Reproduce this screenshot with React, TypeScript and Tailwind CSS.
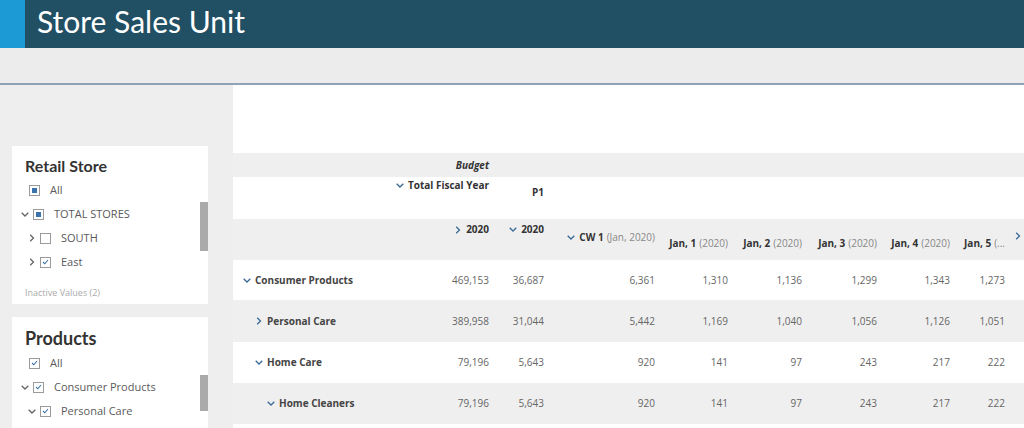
import React from 'react'

const FONT = { fontFamily: '"Open Sans", "Liberation Sans", sans-serif' }
const TITLE_FONT = { fontFamily: 'Lato, "Open Sans", sans-serif' }

const COLS = 'grid grid-cols-[167px_97px_55px_111px_73px_74px_75px_73px_55px_11px]'

function Chevron({ dir, className = '' }: { dir: 'down' | 'right'; className?: string }) {
  if (dir === 'down') {
    return (
      <svg width="8" height="5" viewBox="0 0 8 5" className={`flex-shrink-0 ${className}`}>
        <polyline points="0.7,0.7 4,4 7.3,0.7" fill="none" stroke="currentColor" strokeWidth="1.3" />
      </svg>
    )
  }
  return (
    <svg width="8" height="8" viewBox="0 0 8 8" className={`flex-shrink-0 ${className}`}>
      <polyline points="2.2,0.7 5.5,4 2.2,7.3" fill="none" stroke="currentColor" strokeWidth="1.3" />
    </svg>
  )
}

type Check = 'partial' | 'checked' | 'empty'

function CheckBox({ state }: { state: Check }) {
  return (
    <span className="flex-shrink-0 w-[11px] h-[11px] border border-[#9a9a9a] bg-white flex items-center justify-center">
      {state === 'partial' && <span className="w-[5px] h-[5px] bg-[#3b73ad]" />}
      {state === 'checked' && (
        <svg width="7" height="6" viewBox="0 0 7 6">
          <polyline points="1,3 2.8,4.8 6,1" fill="none" stroke="#3b73ad" strokeWidth="1.1" />
        </svg>
      )}
    </span>
  )
}

interface Item {
  label: string
  level: 0 | 1 | 2
  chevron?: 'down' | 'right'
  state: Check
}

function FilterItem({ item }: { item: Item }) {
  const pad = item.level === 0 ? 'pl-[17px]' : item.level === 1 ? 'pl-[9px]' : 'pl-[16px]'
  return (
    <div className={`h-[24px] flex items-center ${pad}`}>
      {item.chevron && <Chevron dir={item.chevron} className="mr-[4px] text-[#666]" />}
      <CheckBox state={item.state} />
      <span className="ml-[10px] text-[11px] text-[#5a5a5a] whitespace-nowrap">{item.label}</span>
    </div>
  )
}

const storeItems: Item[] = [
  { label: 'All', level: 0, state: 'partial' },
  { label: 'TOTAL STORES', level: 1, chevron: 'down', state: 'partial' },
  { label: 'SOUTH', level: 2, chevron: 'right', state: 'empty' },
  { label: 'East', level: 2, chevron: 'right', state: 'checked' },
]

const productItems: Item[] = [
  { label: 'All', level: 0, state: 'checked' },
  { label: 'Consumer Products', level: 1, chevron: 'down', state: 'checked' },
  { label: 'Personal Care', level: 2, chevron: 'down', state: 'checked' },
]

const rows = [
  { label: 'Consumer Products', level: 0, dir: 'down' as const, vals: ['469,153', '36,687', '6,361', '1,310', '1,136', '1,299', '1,343', '1,273'], h: 'h-[40px]' },
  { label: 'Personal Care', level: 1, dir: 'right' as const, vals: ['389,958', '31,044', '5,442', '1,169', '1,040', '1,056', '1,126', '1,051'], h: 'h-[42px]' },
  { label: 'Home Care', level: 1, dir: 'down' as const, vals: ['79,196', '5,643', '920', '141', '97', '243', '217', '222'], h: 'h-[41px]' },
  { label: 'Home Cleaners', level: 2, dir: 'down' as const, vals: ['79,196', '5,643', '920', '141', '97', '243', '217', '222'], h: 'h-[41px]' },
]

const days = ['Jan, 1', 'Jan, 2', 'Jan, 3', 'Jan, 4']

export default function App() {
  return (
    <div className="w-[1024px] h-[428px] overflow-hidden bg-white flex flex-col" style={FONT}>
      <header className="h-[48px] flex-shrink-0 flex bg-[#214f64]">
        <div className="w-[25px] bg-[#1b9ad6]" />
        <h1 className="ml-[12px] text-[30px] leading-[42px] text-white" style={TITLE_FONT}>
          Store Sales Unit
        </h1>
      </header>
      <div className="h-[35px] flex-shrink-0 bg-[#ececec]" />
      <div className="h-[2px] flex-shrink-0 bg-[#8ea4b6]" />

      <div className="flex flex-1 min-h-0">
        <aside className="w-[233px] flex-shrink-0 bg-[#eeeeee] pt-[61px] pl-[12px] flex flex-col gap-[13px]">
          <section className="relative w-[196px] h-[158px] bg-white pt-[10px]">
            <h2 className="text-[16px] leading-[20px] font-bold text-[#333] pl-[13px]" style={TITLE_FONT}>
              Retail Store
            </h2>
            <div className="mt-[2px]">
              {storeItems.map((it) => (
                <FilterItem key={it.label} item={it} />
              ))}
            </div>
            <p className="mt-[12px] pl-[13px] text-[9px] text-[#aaa]">Inactive Values (2)</p>
            <div className="absolute right-0 top-[56px] w-[8px] h-[49px] bg-[#aaaaaa]" />
          </section>
          <section className="relative w-[196px] flex-1 bg-white pt-[10px]">
            <h2 className="text-[18px] leading-[22px] font-bold text-[#333] pl-[13px]" style={TITLE_FONT}>
              Products
            </h2>
            <div className="mt-[2px]">
              {productItems.map((it) => (
                <FilterItem key={it.label} item={it} />
              ))}
            </div>
            <div className="absolute right-0 top-[58px] w-[8px] h-[36px] bg-[#aaaaaa]" />
          </section>
        </aside>

        <main className="flex-1 pt-[68px] text-[10px]">
          {/* header row 1 */}
          <div className={`${COLS} h-[24px] bg-[#efefef] items-center`}>
            <div />
            <div className="pr-2 text-right font-bold italic text-[#333]">Budget</div>
          </div>
          {/* header row 2 */}
          <div className={`${COLS} h-[42px] bg-white items-start`}>
            <div />
            <div className="pr-2 pt-[1px] flex justify-end items-center whitespace-nowrap font-bold text-[#333]">
              <Chevron dir="down" className="mr-[4px] text-[#3a6a96]" />
              Total Fiscal Year
            </div>
            <div className="pr-2 pt-[8px] text-right font-bold text-[#333]">P1</div>
          </div>
          {/* header row 3 */}
          <div className={`${COLS} h-[41px] bg-[#efefef] items-start`}>
            <div />
            <div className="pr-2 pt-[3px] flex justify-end items-center font-bold text-[#333]">
              <Chevron dir="right" className="mr-[4px] text-[#3a6a96]" />
              2020
            </div>
            <div className="pr-2 pt-[3px] flex justify-end items-center font-bold text-[#333]">
              <Chevron dir="down" className="mr-[4px] text-[#3a6a96]" />
              2020
            </div>
            <div className="pr-2 pt-[11px] flex justify-end items-center whitespace-nowrap text-[#333]">
              <Chevron dir="down" className="mr-[4px] text-[#3a6a96]" />
              <span className="font-bold">CW 1</span>
              <span className="ml-[3px] text-[#888]">(Jan, 2020)</span>
            </div>
            {days.map((d) => (
              <div key={d} className="pr-2 pt-[17px] flex justify-end whitespace-nowrap text-[#333]">
                <span className="font-bold">{d}</span>
                <span className="ml-[3px] text-[#888]">(2020)</span>
              </div>
            ))}
            <div className="pr-2 pt-[17px] flex justify-end whitespace-nowrap text-[#333]">
              <span className="font-bold">Jan, 5</span>
              <span className="ml-[3px] text-[#888]">(...</span>
            </div>
            <div className="pt-[13px] flex justify-start">
              <Chevron dir="right" className="ml-[1px] text-[#3a6a96]" />
            </div>
          </div>
          {/* data rows */}
          {rows.map((r, i) => (
            <div key={r.label} className={`${COLS} ${r.h} ${i % 2 === 0 ? 'bg-white' : 'bg-[#efefef]'} items-center`}>
              <div
                className={`flex items-center font-bold text-[#444] whitespace-nowrap ${
                  r.level === 0 ? 'pl-[10px]' : r.level === 1 ? 'pl-[22px]' : 'pl-[34px]'
                }`}
              >
                <Chevron dir={r.dir} className="mr-[4px] text-[#3a6a96]" />
                {r.label}
              </div>
              {r.vals.map((v, j) => (
                <div key={j} className="pr-2 text-right text-[#666]">
                  {v}
                </div>
              ))}
              <div />
            </div>
          ))}
        </main>
      </div>
    </div>
  )
}
